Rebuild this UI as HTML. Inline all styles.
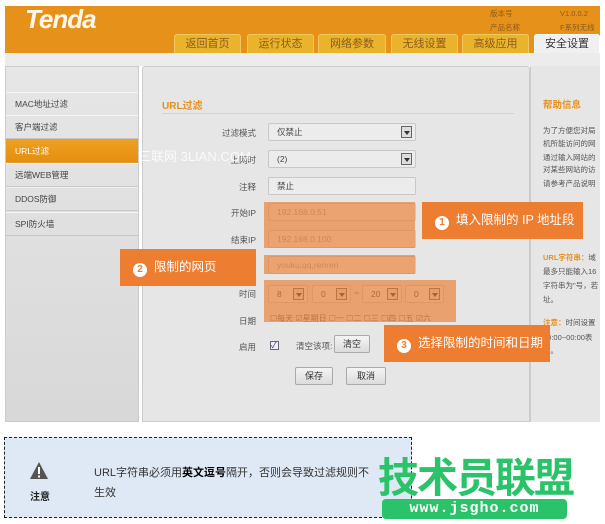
<!DOCTYPE html>
<html><head><meta charset="utf-8"><style>
*{margin:0;padding:0;box-sizing:border-box}
body{width:605px;height:524px;background:#fff;position:relative;overflow:hidden;font-family:"Liberation Sans","Noto Sans CJK SC",sans-serif;font-size:9px;color:#555}
.a{position:absolute}
.hdr{left:5px;top:6px;width:595px;height:47px;background:#e6921a}
.tab{position:absolute;top:34px;height:19px;background:#e9b42c;border:1px solid #f0c860;border-bottom:none;border-radius:3px 3px 0 0;color:#8b5a1c;font-size:11px;text-align:center;line-height:18px}
.side{left:5px;top:66px;width:134px;height:356px;background:linear-gradient(#e6e6e6,#d8d8d8);border:1px solid #ccc}
.it{position:absolute;left:0;width:132px;height:24px;border-top:1px solid #f4f4f4;border-bottom:1px solid #c8c8c8;padding-left:9px;line-height:23px;font-size:8.5px;color:#444}
.main{left:142px;top:66px;width:388px;height:356px;background:#e6e6e6;border:1px solid #ccc;border-radius:3px 3px 0 0}
.help{left:530px;top:66px;width:70px;height:356px;background:#e6e6e6;border-left:1px solid #ccc}
.lbl{position:absolute;width:60px;text-align:right;left:196px;font-size:8.5px;color:#555}
.fld{position:absolute;left:268px;width:148px;height:18px;background:#ececec;border:1px solid #c8c8c8;border-radius:2px;font-size:8.5px;line-height:16px;padding-left:8px;color:#444}
.dd{position:absolute;right:3px;top:2px;width:11px;height:12px;border:1px solid #666;background:#ddd}
.dd:after{content:"";position:absolute;left:2px;top:4px;border:3px solid transparent;border-top:4px solid #333}
.co{position:absolute;background:#ed7d31;color:#fff;font-size:12.5px;line-height:37px}
.num{display:inline-block;width:14px;height:14px;border-radius:50%;background:#fff;color:#ed7d31;font-size:10px;line-height:14px;text-align:center;font-weight:bold;margin-right:7px;vertical-align:-1px}
.ov{position:absolute;background:rgba(237,125,49,0.65)}
.btn{position:absolute;height:18px;border:1px solid #aaa;border-radius:2px;background:linear-gradient(#f4f4f4,#dcdcdc);font-size:9px;text-align:center;line-height:16px;color:#333}
.ht{position:absolute;left:543px;font-size:7.5px;color:#555;white-space:nowrap;width:57px;overflow:hidden}
</style></head><body>
<div class="a hdr"></div>
<div class="a" style="left:25px;top:4px;color:#fff;font-size:26px;font-weight:bold;font-style:italic;letter-spacing:-1px;opacity:.92">Tenda</div>
<div class="a" style="left:490px;top:7px;font-size:7.5px;color:#8a5a20;line-height:14px">版本号<br>产品名称</div>
<div class="a" style="left:560px;top:7px;font-size:7.5px;color:#8a5a20;line-height:14px">V1.0.0.2<br>F系列无线</div>
<div class="tab" style="left:174px;width:67px">返回首页</div>
<div class="tab" style="left:247px;width:67px">运行状态</div>
<div class="tab" style="left:318px;width:68px">网络参数</div>
<div class="tab" style="left:391px;width:67px">无线设置</div>
<div class="tab" style="left:462px;width:67px">高级应用</div>
<div class="tab" style="left:534px;width:66px;background:#f0f0f0;color:#333;border-color:#fff">安全设置</div>
<div class="a" style="left:5px;top:53px;width:595px;height:13px;background:#ececec"></div>

<div class="a side">
<div class="it" style="top:25px">MAC地址过滤</div>
<div class="it" style="top:48px">客户端过滤</div>
<div class="it" style="top:72px;background:linear-gradient(#eea020,#e58e10);color:#fff;border-color:#e0a030">URL过滤</div>
<div class="it" style="top:96px">远端WEB管理</div>
<div class="it" style="top:120px">DDOS防御</div>
<div class="it" style="top:145px">SPI防火墙</div>
</div>
<div class="a main"></div>
<div class="a help"></div>

<div class="a" style="left:162px;top:97px;color:#e8901a;font-size:10px;font-weight:bold">URL过滤</div>
<div class="a" style="left:162px;top:113px;width:352px;height:1px;background:#d4d4d4"></div>

<div class="lbl" style="top:127px">过滤模式</div><div class="fld" style="top:123px">仅禁止<div class="dd"></div></div>
<div class="lbl" style="top:154px">上网时</div><div class="fld" style="top:150px">(2)<div class="dd"></div></div>
<div class="lbl" style="top:181px">注释</div><div class="fld" style="top:177px">禁止</div>
<div class="a" style="left:138px;top:146px;color:rgba(255,255,255,.8);font-size:13px">三联网 3LIAN.COM</div>

<div class="lbl" style="top:207px">开始IP</div><div class="fld" style="top:203px;color:#999">192.168.0.51</div>
<div class="lbl" style="top:234px">结束IP</div><div class="fld" style="top:230px;color:#999">192.168.0.100</div>
<div class="fld" style="top:256px;color:#999">youku,qq,renren</div>
<div class="lbl" style="top:288px">时间</div>
<div class="fld" style="top:285px;left:268px;width:40px">8<div class="dd"></div></div>
<div class="fld" style="top:285px;left:312px;width:39px">0<div class="dd"></div></div>
<div class="a" style="left:354px;top:288px">~</div>
<div class="fld" style="top:285px;left:362px;width:40px">20<div class="dd"></div></div>
<div class="fld" style="top:285px;left:405px;width:39px">0<div class="dd"></div></div>
<div class="lbl" style="top:315px">日期</div>
<div class="a" style="left:270px;top:313px;font-size:8px;color:#666;white-space:nowrap">☐每天 ☑星期日 ☐一 ☐二 ☐三 ☐四 ☐五 ☑六</div>
<div class="lbl" style="top:341px">启用</div>
<div class="a" style="left:270px;top:341px;width:9px;height:9px;border:1px solid #667;background:#eef;font-size:8px;line-height:7px;color:#335">✓</div>
<div class="a" style="left:296px;top:340px;font-size:8.5px">清空该项:</div>
<div class="btn" style="left:334px;top:335px;width:36px">清空</div>
<div class="btn" style="left:295px;top:367px;width:38px">保存</div>
<div class="btn" style="left:346px;top:367px;width:40px">取消</div>

<div class="ov" style="left:264px;top:202px;width:151px;height:46px"></div>
<div class="ov" style="left:264px;top:255px;width:151px;height:19px"></div>
<div class="ov" style="left:264px;top:280px;width:192px;height:42px"></div>

<div class="a" style="left:543px;top:97px;color:#e8901a;font-size:9.5px;font-weight:bold">帮助信息</div>
<div class="ht" style="top:125px">为了方便您对局</div>
<div class="ht" style="top:138px">机所能访问的网</div>
<div class="ht" style="top:152px">通过输入网站的</div>
<div class="ht" style="top:164px">对某些网站的访</div>
<div class="ht" style="top:178px">请参考产品说明</div>
<div class="ht" style="top:201px">如果已设</div>
<div class="ht" style="top:214px">号"保</div>
<div class="ht" style="top:228px">生效</div>
<div class="ht" style="top:252px"><b style="color:#e8901a">URL字符串：</b>域</div>
<div class="ht" style="top:266px">最多只能输入16</div>
<div class="ht" style="top:280px">字符串为"号，若</div>
<div class="ht" style="top:294px">址。</div>
<div class="ht" style="top:317px"><b style="color:#e8901a">注意：</b>时间设置</div>
<div class="ht" style="top:332px">00:00~00:00表</div>
<div class="ht" style="top:345px">效。</div>

<div class="co" style="left:422px;top:202px;width:161px;padding-left:13px">
<span class="num">1</span>填入限制的 IP 地址段</div>
<div class="co" style="left:120px;top:249px;width:136px;padding-left:13px"><span class="num">2</span>限制的网页</div>
<div class="co" style="left:384px;top:325px;width:166px;padding-left:13px"><span class="num">3</span>选择限制的时间和日期</div>

<div class="a" style="left:4px;top:437px;width:408px;height:81px;background:#dfe9f5;border:1px dashed #222"></div>
<svg class="a" style="left:29px;top:461px" width="20" height="19" viewBox="0 0 20 19"><path d="M10 1 L19 18 L1 18 Z" fill="#555"/><rect x="9" y="6" width="2" height="7" fill="#fff"/><rect x="9" y="14.5" width="2" height="2" fill="#fff"/></svg>
<div class="a" style="left:30px;top:488px;font-size:10px;font-weight:bold;color:#222">注意</div>
<div class="a" style="left:94px;top:463px;font-size:11px;color:#333;line-height:20px;width:280px">URL字符串必须用<b style="color:#000">英文逗号</b>隔开，否则会导致过滤规则不生效</div>
<div class="a" style="left:378px;top:453px;font-size:41px;font-weight:bold;color:#2bc36a;letter-spacing:-2px;line-height:50px">技术员联盟</div>
<div class="a" style="left:382px;top:499px;width:185px;height:20px;background:#2bc36a;border-radius:4px;color:#fff;font-family:'Liberation Mono',monospace;font-weight:bold;font-size:15px;text-align:center;line-height:20px;letter-spacing:1px">www.jsgho.com</div>
</body></html>
